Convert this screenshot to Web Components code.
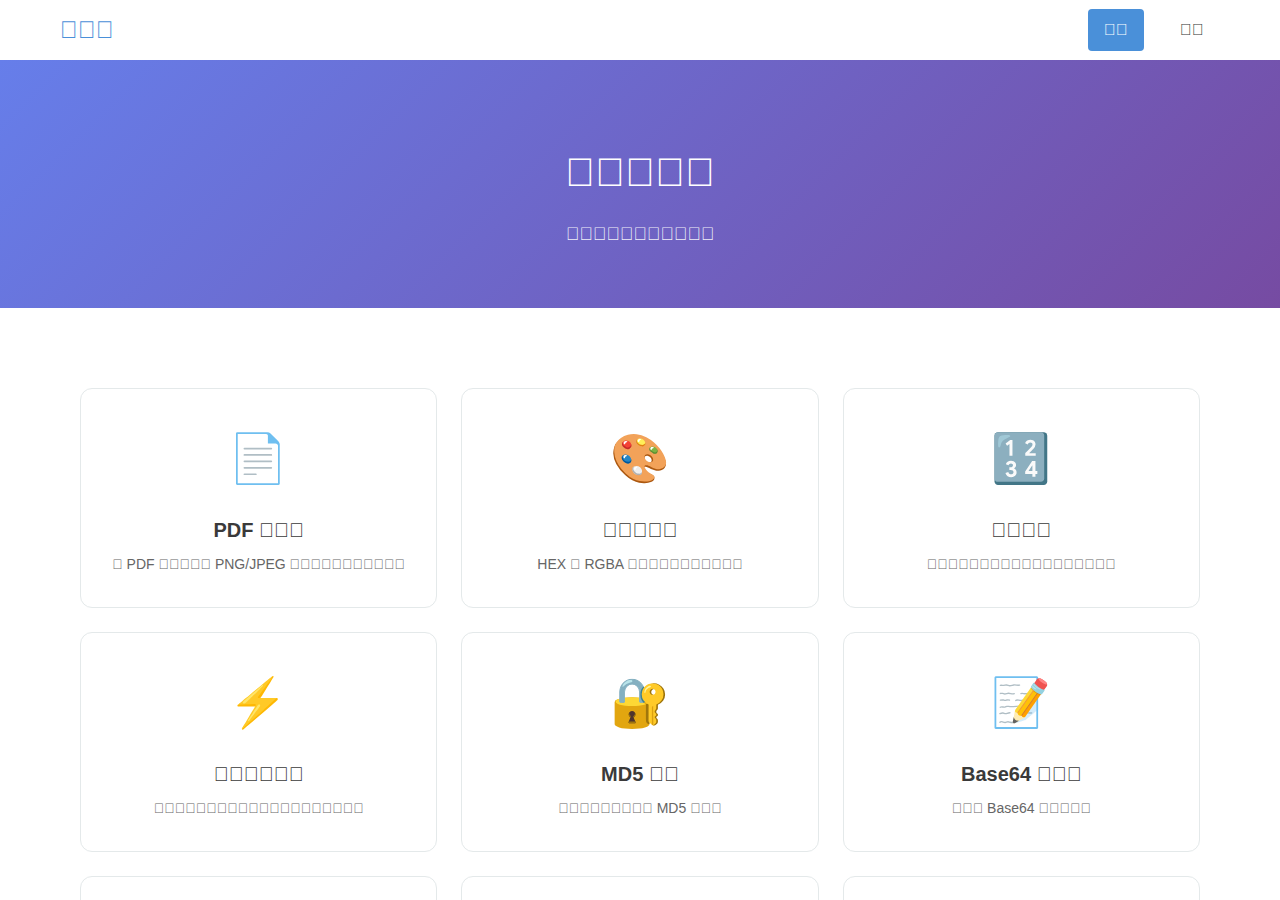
<!DOCTYPE html>
<html lang="zh">
<head>
<meta charset="UTF-8">
<meta name="viewport" content="width=device-width, initial-scale=1.0">
<title>Tools</title>
<style>
  body {
    margin: 0;
    font-family: "Liberation Sans", Arial, sans-serif;
    font-size: 16px;
    line-height: 26px;
    color: #333;
    background-color: #fff;
  }
</style>
</head>
<body>
  <site-header>
    <span slot="brand">&#xE83A;&#xE83A;&#xE83A;</span>
    <nav-link href="#tools" active>&#xE83A;&#xE83A;</nav-link>
    <nav-link href="#about">&#xE83A;&#xE83A;</nav-link>
  </site-header>
  <main>
    <hero-banner>
      <span slot="title">&#xE83A;&#xE83A;&#xE83A;&#xE83A;&#xE83A;</span>
      <span slot="subtitle">&#xE83A;&#xE83A;&#xE83A;&#xE83A;&#xE83A;&#xE83A;&#xE83A;&#xE83A;&#xE83A;&#xE83A;&#xE83A;</span>
    </hero-banner>
    <tool-grid id="tools">
      <tool-card>
        <span slot="icon">📄</span>
        <span slot="name">PDF &#xE83A;&#xE83A;&#xE83A;</span>
        <span slot="description">&#xE83A; PDF &#xE83A;&#xE83A;&#xE83A;&#xE83A;&#xE83A; PNG/JPEG &#xE83A;&#xE83A;&#xE83A;&#xE83A;&#xE83A;&#xE83A;&#xE83A;&#xE83A;&#xE83A;&#xE83A;&#xE83A;</span>
      </tool-card>
      <tool-card>
        <span slot="icon">🎨</span>
        <span slot="name">&#xE83A;&#xE83A;&#xE83A;&#xE83A;&#xE83A;</span>
        <span slot="description">HEX &#xE83A; RGBA &#xE83A;&#xE83A;&#xE83A;&#xE83A;&#xE83A;&#xE83A;&#xE83A;&#xE83A;&#xE83A;&#xE83A;&#xE83A;</span>
      </tool-card>
      <tool-card>
        <span slot="icon">🔢</span>
        <span slot="name">&#xE83A;&#xE83A;&#xE83A;&#xE83A;</span>
        <span slot="description">&#xE83A;&#xE83A;&#xE83A;&#xE83A;&#xE83A;&#xE83A;&#xE83A;&#xE83A;&#xE83A;&#xE83A;&#xE83A;&#xE83A;&#xE83A;&#xE83A;&#xE83A;&#xE83A;&#xE83A;&#xE83A;</span>
      </tool-card>
      <tool-card>
        <span slot="icon">⚡</span>
        <span slot="name">&#xE83A;&#xE83A;&#xE83A;&#xE83A;&#xE83A;&#xE83A;</span>
        <span slot="description">&#xE83A;&#xE83A;&#xE83A;&#xE83A;&#xE83A;&#xE83A;&#xE83A;&#xE83A;&#xE83A;&#xE83A;&#xE83A;&#xE83A;&#xE83A;&#xE83A;&#xE83A;&#xE83A;&#xE83A;&#xE83A;&#xE83A;&#xE83A;</span>
      </tool-card>
      <tool-card>
        <span slot="icon">🔐</span>
        <span slot="name">MD5 &#xE83A;&#xE83A;</span>
        <span slot="description">&#xE83A;&#xE83A;&#xE83A;&#xE83A;&#xE83A;&#xE83A;&#xE83A;&#xE83A;&#xE83A; MD5 &#xE83A;&#xE83A;&#xE83A;</span>
      </tool-card>
      <tool-card>
        <span slot="icon">📝</span>
        <span slot="name">Base64 &#xE83A;&#xE83A;&#xE83A;</span>
        <span slot="description">&#xE83A;&#xE83A;&#xE83A; Base64 &#xE83A;&#xE83A;&#xE83A;&#xE83A;&#xE83A;</span>
      </tool-card>
      <tool-card></tool-card>
      <tool-card></tool-card>
      <tool-card></tool-card>
    </tool-grid>
  </main>

<script>
class SiteHeader extends HTMLElement {
  constructor() {
    super();
    this.attachShadow({ mode: "open" });
    this.shadowRoot.innerHTML = `
      <style>
        :host {
          display: block;
          background-color: #fff;
        }
        .SiteHeader__Inner {
          box-sizing: border-box;
          max-width: 1200px;
          min-height: 60px;
          margin: 0 auto;
          padding: 0 20px;
          display: flex;
          align-items: center;
          justify-content: space-between;
        }
        .SiteHeader__Brand {
          font-size: 24px;
          line-height: 38px;
          font-weight: 700;
          color: #4a90d9;
          text-decoration: none;
        }
        .SiteHeader__Nav {
          display: flex;
          gap: 20px;
        }
      </style>
      <header class="SiteHeader__Inner">
        <a class="SiteHeader__Brand" href="#"><slot name="brand"></slot></a>
        <nav class="SiteHeader__Nav"><slot></slot></nav>
      </header>
    `;
  }
}

class NavLink extends HTMLElement {
  constructor() {
    super();
    this.attachShadow({ mode: "open" });
    this.shadowRoot.innerHTML = `
      <style>
        :host {
          display: block;
        }
        .NavLink {
          display: block;
          padding: 8px 16px;
          border-radius: 4px;
          color: #333;
          text-decoration: none;
        }
        :host([active]) .NavLink {
          color: #fff;
          background-color: #4a90d9;
        }
      </style>
      <a class="NavLink"><slot></slot></a>
    `;
  }

  connectedCallback() {
    this.shadowRoot.querySelector(".NavLink").href = this.getAttribute("href");
  }
}

class HeroBanner extends HTMLElement {
  constructor() {
    super();
    this.attachShadow({ mode: "open" });
    this.shadowRoot.innerHTML = `
      <style>
        :host {
          display: block;
          padding: 80px 20px 60px;
          text-align: center;
          color: #fff;
          background: linear-gradient(135deg, #667eea 0%, #764ba2 100%);
        }
        .HeroBanner__Title {
          margin: 0 0 16px;
          font-size: 40px;
          line-height: 64px;
          font-weight: 700;
        }
        .HeroBanner__Subtitle {
          margin: 0;
          font-size: 18px;
          line-height: 28px;
          color: rgba(255, 255, 255, 0.9);
        }
      </style>
      <h1 class="HeroBanner__Title"><slot name="title"></slot></h1>
      <p class="HeroBanner__Subtitle"><slot name="subtitle"></slot></p>
    `;
  }
}

class ToolGrid extends HTMLElement {
  constructor() {
    super();
    this.attachShadow({ mode: "open" });
    this.shadowRoot.innerHTML = `
      <style>
        :host {
          box-sizing: border-box;
          display: grid;
          grid-template-columns: repeat(auto-fill, minmax(300px, 1fr));
          gap: 24px;
          max-width: 1200px;
          margin: 0 auto;
          padding: 80px 40px;
        }
      </style>
      <slot></slot>
    `;
  }
}

class ToolCard extends HTMLElement {
  constructor() {
    super();
    this.attachShadow({ mode: "open" });
    this.shadowRoot.innerHTML = `
      <style>
        :host {
          display: block;
          padding: 32px 24px;
          border: 1px solid #e4e9ea;
          border-radius: 12px;
          background-color: #fff;
          text-align: center;
        }
        .ToolCard__Icon {
          height: 76px;
          margin-bottom: 16px;
          font-family: "Liberation Sans", "Noto Color Emoji", sans-serif;
          font-size: 48px;
          line-height: 76px;
        }
        .ToolCard__Name {
          margin: 0 0 6px;
          font-size: 20px;
          line-height: 34px;
          font-weight: 700;
          color: #3a3a3a;
        }
        .ToolCard__Description {
          margin: 0;
          font-size: 14px;
          line-height: 22px;
          color: #666;
        }
      </style>
      <div class="ToolCard__Icon"><slot name="icon"></slot></div>
      <h3 class="ToolCard__Name"><slot name="name"></slot></h3>
      <p class="ToolCard__Description"><slot name="description"></slot></p>
    `;
  }
}

customElements.define("site-header", SiteHeader);
customElements.define("nav-link", NavLink);
customElements.define("hero-banner", HeroBanner);
customElements.define("tool-grid", ToolGrid);
customElements.define("tool-card", ToolCard);
</script>
</body>
</html>
